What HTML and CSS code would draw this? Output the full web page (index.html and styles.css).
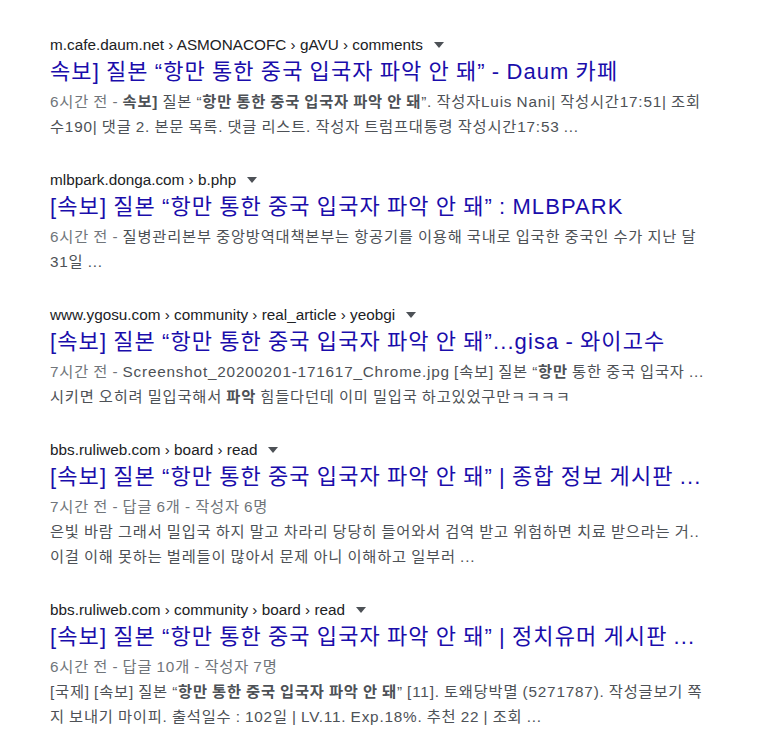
FILE: index.html
```html
<!DOCTYPE html>
<html lang="ko">
<head>
<meta charset="utf-8">
<link rel="stylesheet" href="styles.css">
</head>
<body>
<div class="results">
  <div class="result">
    <div class="url"><span>m.cafe.daum.net › ASMONACOFC › gAVU › comments</span><span class="caret"></span></div>
    <div class="title">속보] 질본 “항만 통한 중국 입국자 파악 안 돼” - Daum 카페</div>
    <div class="snippet"><span class="date">6시간 전 - </span><b>속보]</b> 질본 “<b>항만 통한 중국 입국자 파악 안 돼</b>”. 작성자Luis Nani| 작성시간17:51| 조회수190| 댓글 2. 본문 목록. 댓글 리스트. 작성자 트럼프대통령 작성시간17:53 ...</div>
  </div>
  <div class="result">
    <div class="url"><span>mlbpark.donga.com › b.php</span><span class="caret"></span></div>
    <div class="title">[속보] 질본 “항만 통한 중국 입국자 파악 안 돼” : MLBPARK</div>
    <div class="snippet"><span class="date">6시간 전 - </span>질병관리본부 중앙방역대책본부는 항공기를 이용해 국내로 입국한 중국인 수가 지난 달 31일 ...</div>
  </div>
  <div class="result">
    <div class="url"><span>www.ygosu.com › community › real_article › yeobgi</span><span class="caret"></span></div>
    <div class="title">[속보] 질본 “항만 통한 중국 입국자 파악 안 돼”...gisa - 와이고수</div>
    <div class="snippet"><span class="date">7시간 전 - </span>Screenshot_20200201-171617_Chrome.jpg [속보] 질본 “<b>항만</b> 통한 중국 입국자 ... 시키면 오히려 밀입국해서 <b>파악</b> 힘들다던데 이미 밀입국 하고있었구만ㅋㅋㅋㅋ</div>
  </div>
  <div class="result">
    <div class="url"><span>bbs.ruliweb.com › board › read</span><span class="caret"></span></div>
    <div class="title">[속보] 질본 “항만 통한 중국 입국자 파악 안 돼” | 종합 정보 게시판 ...</div>
    <div class="meta">7시간 전 - 답글 6개 - 작성자 6명</div>
    <div class="snippet">은빛 바람 그래서 밀입국 하지 말고 차라리 당당히 들어와서 검역 받고 위험하면 치료 받으라는 거.. 이걸 이해 못하는 벌레들이 많아서 문제 아니 이해하고 일부러 ...</div>
  </div>
  <div class="result">
    <div class="url"><span>bbs.ruliweb.com › community › board › read</span><span class="caret"></span></div>
    <div class="title">[속보] 질본 “항만 통한 중국 입국자 파악 안 돼” | 정치유머 게시판 ...</div>
    <div class="meta">6시간 전 - 답글 10개 - 작성자 7명</div>
    <div class="snippet">[국제] [속보] 질본 “<b>항만 통한 중국 입국자 파악 안 돼</b>” [11]. 토왜당박멸 (5271787). 작성글보기 쪽지 보내기 마이피. 출석일수 : 102일 | LV.11. Exp.18%. 추천 22 | 조회 ...</div>
  </div>
</div>
</body>
</html>
```
FILE: styles.css
```css
html, body {
  margin: 0;
  padding: 0;
  background: #fff;
}
body {
  font-family: "Liberation Sans", Arial, "Noto Sans CJK KR", sans-serif;
}
.results {
  padding: 35px 0 0 50px;
  width: 656px;
}
.result {
  margin-bottom: 31px;
}
.url {
  font-size: 15.3px;
  line-height: 20px;
  color: #202124;
  display: flex;
  align-items: center;
}
.caret {
  width: 0;
  height: 0;
  border-left: 5px solid transparent;
  border-right: 5px solid transparent;
  border-top: 6px solid #4d5156;
  margin-left: 11px;
}
.title {
  font-size: 22px;
  line-height: 28px;
  color: #1a0dab;
  padding-top: 3px;
  white-space: nowrap;
  letter-spacing: 1.1px;
  word-spacing: -1.1px;
}
.snippet, .meta {
  font-size: 15.3px;
  line-height: 25px;
  color: #4d5156;
  letter-spacing: 0.8px;
  word-spacing: -0.8px;
}
.title + .snippet, .title + .meta {
  padding-top: 3px;
}
.meta, .date {
  color: #70757a;
}
.snippet b {
  font-weight: bold;
}
```
